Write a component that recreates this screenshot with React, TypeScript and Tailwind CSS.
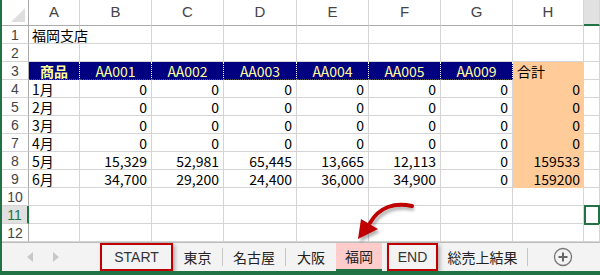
import React from 'react'

const cols = ['A', 'B', 'C', 'D', 'E', 'F', 'G', 'H', 'I']

const zeros = ['0', '0', '0', '0', '0', '0']
const rows: (string | null)[][] = [
  ['福岡支店'],
  [],
  ['商品', 'AA001', 'AA002', 'AA003', 'AA004', 'AA005', 'AA009', '合計'],
  ['1月', ...zeros, '0'],
  ['2月', ...zeros, '0'],
  ['3月', ...zeros, '0'],
  ['4月', ...zeros, '0'],
  ['5月', '15,329', '52,981', '65,445', '13,665', '12,113', '0', '159533'],
  ['6月', '34,700', '29,200', '24,400', '36,000', '34,900', '0', '159200'],
  [],
  [],
  [],
]

const cellFont = { fontFamily: '"Noto Sans CJK JP", "Liberation Sans", sans-serif' }
const headFont = { fontFamily: '"Liberation Sans", Arial, sans-serif' }

function Cell({ r, c, v }: { r: number; c: number; v: string | null | undefined }) {
  const isHead = r === 3 && c >= 0 && c <= 6
  const isTotal = c === 7 && r >= 3 && r <= 9
  const active = r === 11 && c === 8

  if (active) {
    return <div className="border-2 border-[#217346] -mt-px h-[20px]" />
  }
  if (isHead) {
    return (
      <div
        className={`flex items-center justify-center bg-[#000080] text-[#ffff99] text-[14px] leading-[16px] border-r border-dotted border-white border-b border-b-[#555] ${c === 0 ? 'font-bold' : ''}`}
        style={cellFont}
      >
        {v}
      </div>
    )
  }
  if (isTotal) {
    return (
      <div
        className={`flex items-center bg-[#ffcc99] text-black text-[14px] leading-[16px] px-[4px] ${r === 3 ? 'justify-start' : 'justify-end'}`}
        style={cellFont}
      >
        {v}
      </div>
    )
  }
  const left = c === 0
  return (
    <div
      className={`flex items-center border-r border-b border-[#d4d4d4] text-black text-[14px] leading-[16px] whitespace-nowrap ${left ? 'justify-start pl-[3px]' : 'justify-end pr-[4px]'}`}
      style={cellFont}
    >
      {v ?? ''}
    </div>
  )
}

function Tab({ label, boxed, active }: { label: string; boxed?: boolean; active?: boolean }) {
  if (boxed) {
    return (
      <div className="h-full flex items-center justify-center border-2 border-[#c00000] shadow-[2px_2px_4px_rgba(0,0,0,0.3)] bg-[#f3f3f3] text-[14px] text-[#333]" style={headFont}>
        {label}
      </div>
    )
  }
  return (
    <div
      className={`h-full flex items-center justify-center text-[14px] text-[#222] ${active ? 'bg-[#ffcccc] border-b-2 border-[#217346]' : ''}`}
      style={cellFont}
    >
      {label}
    </div>
  )
}

function Sep() {
  return <div className="w-px h-[18px] bg-[#c6c6c6]" />
}

export default function App() {
  return (
    <div className="relative w-[600px] h-[275px] overflow-hidden bg-white border-l-2 border-[#217346] flex flex-col">
      <div className="grid grid-cols-[27px_51px_72px_72px_73px_72px_72px_72px_71px_1fr] grid-rows-[26px_repeat(12,18px)]">
        {/* corner */}
        <div className="relative border-r border-b border-[#ababab] bg-white">
          <div className="absolute right-[3px] bottom-[3px] w-0 h-0 border-l-[14px] border-l-transparent border-b-[14px] border-b-[#dfdfdf]" />
        </div>
        {cols.map(c => (
          <div
            key={c}
            className={`flex items-center justify-center text-[15px] text-[#444] border-r border-[#d4d4d4] ${c === 'I' ? 'bg-[#e1e1e1] border-b-2 border-b-[#217346]' : 'bg-white border-b border-b-[#ababab]'}`}
            style={headFont}
          >
            {c === 'I' ? '' : c}
          </div>
        ))}
        {rows.map((row, i) => {
          const r = i + 1
          return (
            <React.Fragment key={r}>
              <div
                className={`flex items-center justify-center text-[14px] leading-[16px] border-b border-[#d4d4d4] ${r === 11 ? 'bg-[#e1e1e1] text-[#217346] border-r-2 border-r-[#217346]' : 'bg-white text-[#444] border-r border-r-[#ababab]'}`}
                style={headFont}
              >
                {r}
              </div>
              {cols.map((_, c) => (
                <Cell key={c} r={r} c={c} v={row[c]} />
              ))}
            </React.Fragment>
          )
        })}
      </div>

      {/* sheet tabs */}
      <div className="h-[29px] border-t border-[#bdbdbd] bg-[#f3f3f3] flex items-stretch">
        <div className="w-[98px] flex items-center pl-[24px] gap-[18px]">
          <svg width="8" height="10" viewBox="0 0 8 10"><path d="M7 0 L1 5 L7 10 Z" fill="#c8c8c8" /></svg>
          <svg width="8" height="10" viewBox="0 0 8 10"><path d="M1 0 L7 5 L1 10 Z" fill="#c8c8c8" /></svg>
        </div>
        <div className="w-[73px]"><Tab label="START" boxed /></div>
        <div className="w-[49px]"><Tab label="東京" /></div>
        <div className="flex items-center"><Sep /></div>
        <div className="w-[62px]"><Tab label="名古屋" /></div>
        <div className="flex items-center"><Sep /></div>
        <div className="w-[50px]"><Tab label="大阪" /></div>
        <div className="w-[46px]"><Tab label="福岡" active /></div>
        <div className="w-[5px]" />
        <div className="w-[51px]"><Tab label="END" boxed /></div>
        <div className="w-[89px]"><Tab label="総売上結果" /></div>
        <div className="flex items-center"><Sep /></div>
        <div className="flex-1 flex items-center justify-center pr-[2px]">
          <svg width="20" height="20" viewBox="0 0 20 20">
            <circle cx="10" cy="10" r="8.5" fill="none" stroke="#777" strokeWidth="1.3" />
            <path d="M10 5.5 V14.5 M5.5 10 H14.5" stroke="#666" strokeWidth="2" />
          </svg>
        </div>
      </div>
      <div className="h-[4px] bg-[#217346]" />

      {/* red curved arrow */}
      <svg className="absolute left-0 top-0 pointer-events-none" width="600" height="275">
        <defs>
          <filter id="blur" x="-20%" y="-20%" width="140%" height="140%">
            <feGaussianBlur stdDeviation="1.8" />
          </filter>
        </defs>
        <g transform="translate(2 3)" opacity="0.45" filter="url(#blur)">
          <path d="M410 206 C393 202 377 207 368 223" fill="none" stroke="#555" strokeWidth="4" />
          <path d="M356 239 L359 219 L376 229 Z" fill="#555" />
        </g>
        <path d="M410 206 C393 202 377 207 368 223" fill="none" stroke="#c00000" strokeWidth="4" strokeLinecap="round" />
        <path d="M356 239 L359 219 L376 229 Z" fill="#c00000" />
      </svg>
    </div>
  )
}
